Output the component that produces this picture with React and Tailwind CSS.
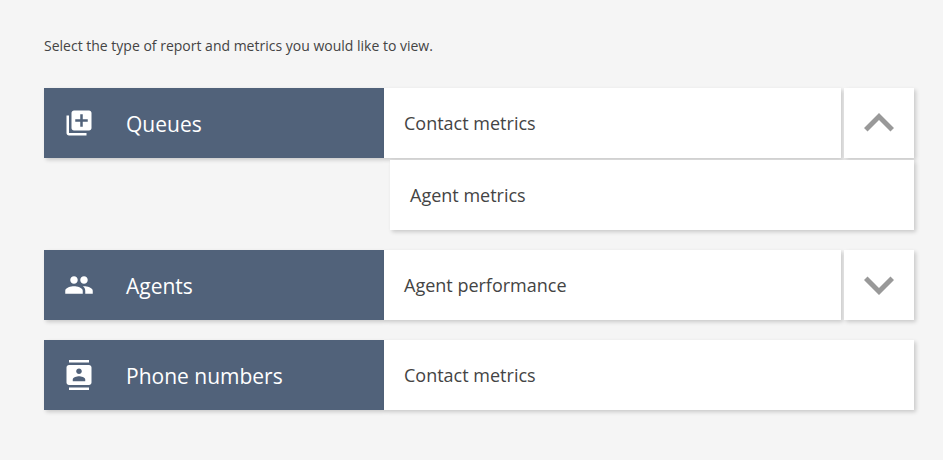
import { MdLibraryAdd, MdPeople, MdContacts, MdExpandLess, MdExpandMore } from "react-icons/md";

const groups = [
  { name: "Queues", Icon: MdLibraryAdd, metric: "Contact metrics", extra: "Agent metrics", toggle: "up" },
  { name: "Agents", Icon: MdPeople, metric: "Agent performance", toggle: "down" },
  { name: "Phone numbers", Icon: MdContacts, metric: "Contact metrics" },
];

function Group({ name, Icon, metric, extra, toggle }) {
  const Chevron = toggle === "up" ? MdExpandLess : MdExpandMore;
  return (
    <section>
      <div className="flex h-[70px]">
        <div className="flex w-[340px] shrink-0 items-center bg-[#51627a] pl-5 text-white shadow-[2px_2px_4px_rgba(0,0,0,0.18)]">
          <Icon className="size-[30px]" aria-hidden="true" />
          <h2 className="ml-8 pt-0.5 text-[21px] leading-7 font-medium">{name}</h2>
        </div>
        <button type="button" className="min-w-0 flex-1 bg-white px-5 text-left text-[18px] leading-6 shadow-[2px_2px_4px_rgba(0,0,0,0.18)]">
          {metric}
        </button>
        {toggle && (
          <button type="button" aria-label={"Toggle " + name} aria-expanded={toggle === "up"} className="ml-[3px] flex w-[70px] shrink-0 items-center justify-center bg-white text-[#999] shadow-[2px_2px_4px_rgba(0,0,0,0.18)]">
            <Chevron className="size-[60px]" />
          </button>
        )}
      </div>
      {extra && (
        <div className="mt-0.5 flex pl-[346px]">
          <button type="button" className="h-[70px] flex-1 bg-white px-5 text-left text-[18px] leading-6 shadow-[2px_2px_4px_rgba(0,0,0,0.18)]">
            {extra}
          </button>
        </div>
      )}
    </section>
  );
}

export default function App() {
  return (
    <main className="min-h-screen bg-[#f5f5f5] pt-9 pr-[29px] pb-12 pl-11 font-['Open_Sans',sans-serif] text-[#444]">
      <p className="text-[14px] leading-5">Select the type of report and metrics you would like to view.</p>
      <div className="mt-8 flex flex-col gap-5">
        {groups.map((group) => (
          <Group key={group.name} {...group} />
        ))}
      </div>
    </main>
  );
}
